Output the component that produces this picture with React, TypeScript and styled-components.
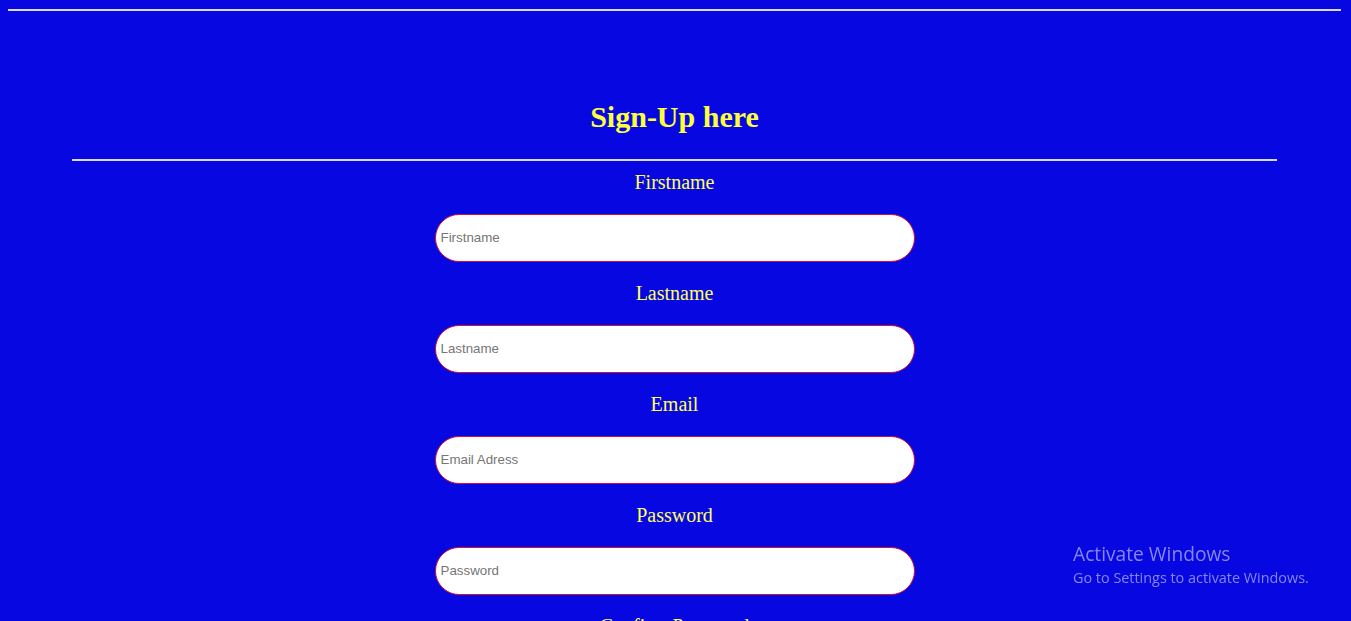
import React from "react";
import styled, { createGlobalStyle } from "styled-components";

const Global = createGlobalStyle`
  html, body { height: 100%; }
  body {
    margin: 0 10px 0 8px;
    background: #0707e2;
    font-family: "Liberation Serif", "Times New Roman", serif;
    overflow: hidden;
  }
`;

const Page = styled.div`
  display: flex;
  flex-direction: column;
  align-items: center;
  padding-top: 9px;
`;

const TopRule = styled.hr`
  align-self: stretch;
  margin: 0;
  border: 0;
  height: 2px;
  background: #d9d9ee;
`;

const Heading = styled.h2`
  margin: 88px 0 0;
  font-size: 30px;
  line-height: 36px;
  font-weight: bold;
  color: #ffff3a;
`;

const MidRule = styled.hr`
  width: 1205px;
  margin: 24px 0 0;
  border: 0;
  height: 2px;
  background: #d9d9ee;
`;

const Form = styled.form`
  display: flex;
  flex-direction: column;
  align-items: center;
  margin-top: 9px;
`;

const Field = styled.div`
  display: flex;
  flex-direction: column;
  align-items: center;
  margin-bottom: 19px;
`;

const Label = styled.label`
  font-size: 20px;
  line-height: 24px;
  color: #ffff5a;
  margin-bottom: 20px;
`;

const Input = styled.input`
  box-sizing: border-box;
  width: 480px;
  height: 48px;
  border: 1px solid #d0103c;
  border-radius: 24px;
  background: #fff;
  padding: 0 5px 1px;
  font-family: "Liberation Sans", Arial, sans-serif;
  font-size: 13.33px;
  outline: none;
  &::placeholder { color: #767676; }
`;

const Watermark = styled.div`
  position: fixed;
  left: 1073px;
  top: 544px;
  font-family: "Open Sans", "Noto Sans", sans-serif;
  color: #8686ee;
  line-height: 1;
`;

const WmTitle = styled.div`
  font-size: 19.2px;
  margin-bottom: 8px;
`;

const WmSub = styled.div`
  font-size: 14.4px;
`;

const fields = [
  { label: "Firstname", ph: "Firstname", type: "text" },
  { label: "Lastname", ph: "Lastname", type: "text" },
  { label: "Email", ph: "Email Adress", type: "email" },
  { label: "Password", ph: "Password", type: "password" },
  { label: "Confirm Password", ph: "Confirm Password", type: "password" },
];

export default function App() {
  return (
    <>
      <Global />
      <Page>
        <TopRule />
        <Heading>Sign-Up here</Heading>
        <MidRule />
        <Form onSubmit={(e) => e.preventDefault()}>
          {fields.map((f) => (
            <Field key={f.label}>
              <Label>{f.label}</Label>
              <Input type={f.type} placeholder={f.ph} />
            </Field>
          ))}
        </Form>
      </Page>
      <Watermark>
        <WmTitle>Activate Windows</WmTitle>
        <WmSub>Go to Settings to activate Windows.</WmSub>
      </Watermark>
    </>
  );
}
